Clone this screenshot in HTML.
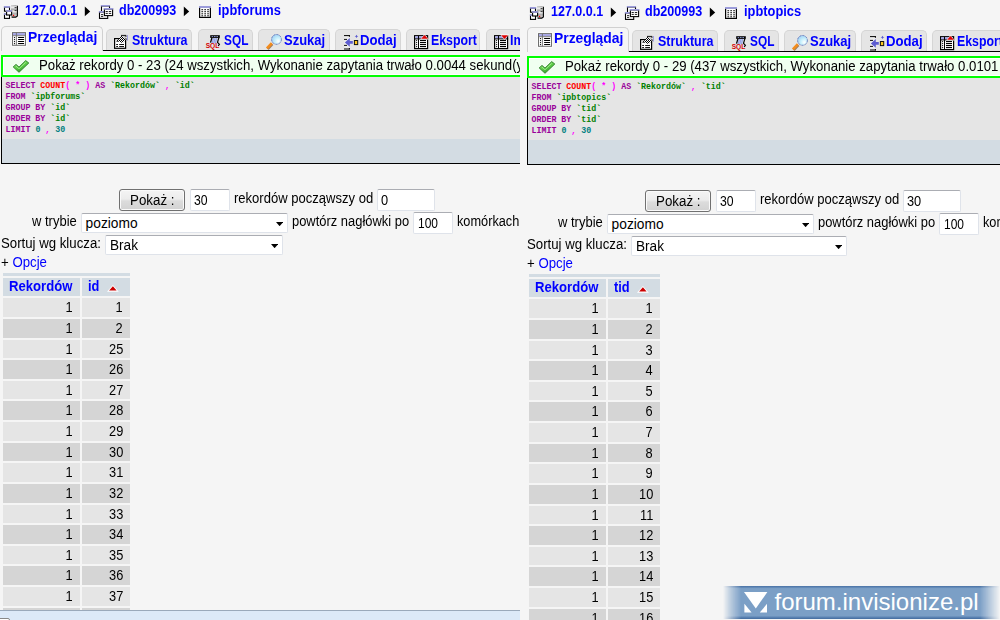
<!DOCTYPE html>
<html lang="pl"><head><meta charset="utf-8"><title>phpMyAdmin</title>
<style>
html,body{margin:0;padding:0}
body{width:1000px;height:620px;overflow:hidden;background:#f5f5f5;position:relative;font-family:"Liberation Sans",sans-serif;font-size:13.12px;color:#000}
.panel{position:absolute;overflow:hidden;background:#f5f5f5}
.inner{position:absolute;width:700px;height:700px}
.ic{position:absolute;display:block;line-height:0}
.ic svg{display:block;overflow:visible}
a,.l{color:#0000ff;text-decoration:none}
.x{position:absolute;white-space:nowrap;line-height:16px;transform-origin:0 50%}
.tabline{position:absolute;left:1px;top:50px;width:700px;height:1px;background:#000}
.tab{position:absolute;top:29px;height:21px;box-sizing:border-box;background:#e5e5e5;border:1px solid #d5d5d5;border-bottom:0;border-radius:5px 5px 0 0}
.tab.act{top:26px;height:25px;background:#f5f5f5;border-color:#d0d0d0}
.ok{position:absolute;left:1px;top:55px;width:700px;height:22px;box-sizing:border-box;border:2px solid #00ff00;background:#f0fff0;box-shadow:inset 0 0 0 1px #fff}
.sqlbox{position:absolute;left:1px;top:77px;width:700px;height:87px;box-sizing:border-box;border:1px solid #000;border-top:0;background:#e5e5e5}
.sql{margin:0;position:absolute;left:3.5px;top:4px;font-family:"Liberation Mono",monospace;font-size:8.3px;line-height:10.95px;white-space:pre;font-weight:bold}
.sql .k{color:#990099;font-weight:bold}
.sql .f{color:#ff0000}
.sql .p{color:#ff00ff}
.sql .q{color:#008000}
.sql .n{color:#008080}
.tools{position:absolute;left:0;top:61.5px;width:100%;height:24.5px;background:#d3dce3}
.btn{position:absolute;box-sizing:border-box;border:1px solid #707070;border-radius:3px;background:linear-gradient(#f4f4f4 0,#ececec 45%,#dcdcdc 55%,#d2d2d2 100%);box-shadow:inset 0 0 0 1px #fafafa}
.inp{position:absolute;box-sizing:border-box;border:1px solid #dfe3ea;border-top-color:#abadb3;background:#fff;border-radius:2px}
.sel{position:absolute;box-sizing:border-box;border:1px solid #dfe3ea;border-top-color:#abadb3;background:#fff;border-radius:2px}
.sel svg{position:absolute;right:3.9px;top:7.8px}
.strip{position:absolute;background:#d3dce3}
.th{position:absolute;background:#d3dce3}
.td{position:absolute;height:18.64px}
.td.odd{background:#e5e5e5}
.td.even{background:#d5d5d5}
.bar{position:absolute;left:0;top:610px;width:100%;height:10px;box-sizing:border-box;border-top:1px solid #9aa9bb;background:#dce9f8}
.knob{position:absolute;left:-3px;top:7px;width:11px;height:8px;border:1px solid #888;border-radius:2px;background:#fff}
.wm{position:absolute;left:723px;top:586px;width:277px;height:33px}
.wmbg{position:absolute;left:0;top:0;width:100%;height:32.5px;background:linear-gradient(#4a72a4 0,#5c84b4 1.2px,#7b9fc6 2.6px,#7b9fc6 29.8px,#5c84b4 31.2px,#4a72a4 32.5px);-webkit-mask-image:linear-gradient(to right,transparent 0,rgba(0,0,0,.5) 8px,#000 18px,#000 257px,rgba(0,0,0,.5) 267px,transparent 277px);mask-image:linear-gradient(to right,transparent 0,rgba(0,0,0,.5) 8px,#000 18px,#000 257px,rgba(0,0,0,.5) 267px,transparent 277px)}
.wmi{position:absolute;left:21px;top:5.5px}
.wmt{position:absolute;left:51.5px;top:0.5px;color:#fff;font-size:24px;line-height:30px;white-space:nowrap}
.rows{position:absolute;left:0;top:0}

</style></head><body>
<div class="panel" style="left:0px;top:0;width:520px;height:620px">
<div class="inner" style="left:0px;top:0px">
<span class="ic" style="left:3px;top:4px"><svg width="16" height="16" viewBox="0 0 16 16" ><defs><linearGradient id="tw" x1="0" y1="0" x2="0" y2="1"><stop offset="0" stop-color="#9a9a9a"/><stop offset=".18" stop-color="#f4f4f4"/><stop offset=".36" stop-color="#a8a8a8"/><stop offset=".52" stop-color="#f4f4f4"/><stop offset=".7" stop-color="#b0b0b0"/><stop offset="1" stop-color="#d8d8d8"/></linearGradient></defs><path d="M8 1.6 L13 1 L14.4 2 L14.4 12 L12.6 13.2 L8 13.2 Z" fill="url(#tw)"/><path d="M14.4 1.8 L14.4 12 L12.8 13.1 L8.6 13.1" fill="none" stroke="#000" stroke-width="1.1"/><path d="M11.6 3.6 l2 0 M11.6 6.6 l2 0" stroke="#222" stroke-width="0.9"/><rect x="9.9" y="10.8" width="1.3" height="1.3" fill="#ff0000"/><rect x="1.5" y="3" width="5" height="4.2" fill="#fff" stroke="#000" stroke-width="1.1"/><rect x="0.9" y="2" width="6.2" height="1.7" fill="#9c9cdc"/><rect x="1.5" y="10.2" width="5" height="4.2" fill="#fff" stroke="#000" stroke-width="1.1"/><rect x="0.9" y="9.2" width="2" height="1.7" fill="#9c9cdc"/><rect x="3.6" y="7" width="5" height="4" fill="#fff" stroke="#000" stroke-width="1.1"/><rect x="3" y="6.1" width="6" height="1.7" fill="#9c9cdc"/></svg></span>
<span class="x l" style="top:3.00px;font-size:13.78px;transform:scaleX(0.9083);left:25.40px;font-weight:bold;">127.0.0.1</span>
<span class="ic" style="left:84px;top:6px"><svg width="7" height="11" viewBox="0 0 7 11" ><path d="M0.8 0.6 L6.2 5.4 L0.8 10.2 Z" fill="#000"/></svg></span>
<span class="ic" style="left:98px;top:4px"><svg width="16" height="16" viewBox="0 0 16 16" ><rect x="3.5" y="2" width="8" height="7" fill="#fff" stroke="#000" stroke-width="1.1"/><rect x="2.9" y="1" width="9" height="1.5" fill="#9c9cdc"/><rect x="1.5" y="8" width="8.2" height="6.4" fill="#fff" stroke="#000" stroke-width="1.1"/><rect x="0.9" y="7" width="5" height="1.6" fill="#9c9cdc"/><rect x="3" y="10.1" width="2.2" height="1" fill="#222"/><rect x="3" y="11.9" width="2.2" height="1" fill="#222"/><rect x="6.4" y="5" width="8.2" height="6.6" fill="#fff" stroke="#000" stroke-width="1.1"/><rect x="5.8" y="4" width="9.4" height="1.6" fill="#9c9cdc"/><g fill="#222"><rect x="7.6" y="7" width="2.2" height="1"/><rect x="10.8" y="7" width="2.4" height="1"/><rect x="7.6" y="8.9" width="2.2" height="1"/><rect x="10.8" y="8.9" width="2.4" height="1"/></g></svg></span>
<span class="x l" style="top:3.00px;font-size:13.78px;transform:scaleX(0.9137);left:118.80px;font-weight:bold;">db200993</span>
<span class="ic" style="left:183px;top:6px"><svg width="7" height="11" viewBox="0 0 7 11" ><path d="M0.8 0.6 L6.2 5.4 L0.8 10.2 Z" fill="#000"/></svg></span>
<span class="ic" style="left:198px;top:5px"><svg width="14" height="14" viewBox="0 0 14 14" ><rect x="1.6" y="1.8" width="10.8" height="10.6" fill="#fff" stroke="#000" stroke-width="1.2"/><rect x="1" y="1" width="12" height="1.9" fill="#9c9cdc"/><g fill="#111"><rect x="3.4" y="4.2" width="1.7" height="1"/><rect x="6.3" y="4.2" width="1.7" height="1"/><rect x="9.2" y="4.2" width="1.7" height="1"/><rect x="3.4" y="6.2" width="1.7" height="1"/><rect x="6.3" y="6.2" width="1.7" height="1"/><rect x="9.2" y="6.2" width="1.7" height="1"/><rect x="3.4" y="8.3" width="1.7" height="1"/><rect x="6.3" y="8.3" width="1.7" height="1"/><rect x="9.2" y="8.3" width="1.7" height="1"/><rect x="3.4" y="10.3" width="1.7" height="1"/><rect x="6.3" y="10.3" width="1.7" height="1"/><rect x="9.2" y="10.3" width="1.7" height="1"/></g></svg></span>
<span class="x l" style="top:3.00px;font-size:13.78px;transform:scaleX(0.9330);left:218.00px;font-weight:bold;">ipbforums</span>
<div class="tabline"></div>
<div class="tab act" style="left:1px;width:102px"></div>
<span class="ic" style="left:11px;top:31px"><svg width="16" height="16" viewBox="0 0 16 16" ><rect x="0.4" y="0.5" width="15.2" height="15" fill="#fff"/><rect x="1.5" y="1.6" width="13" height="12.7" fill="#fff" stroke="#6e6e6e" stroke-width="1"/><rect x="2" y="2.1" width="12" height="2.2" fill="#a2a2e2"/><rect x="1" y="4.3" width="14" height="0.9" fill="#6e6e6e"/><rect x="4.9" y="1.6" width="0.9" height="12.7" fill="#6e6e6e"/><g fill="#000"><circle cx="3.5" cy="6.55" r="0.65"/><rect x="7" y="6" width="6.2" height="1.1" rx=".4"/><circle cx="3.5" cy="8.55" r="0.65"/><rect x="7" y="8" width="6.2" height="1.1" rx=".4"/><circle cx="3.5" cy="10.55" r="0.65"/><rect x="7" y="10" width="6.2" height="1.1" rx=".4"/><circle cx="3.5" cy="12.55" r="0.65"/><rect x="7" y="12" width="6.2" height="1.1" rx=".4"/></g></svg></span>
<span class="x l" style="top:30.00px;font-size:13.78px;transform:scaleX(1.0068);left:28.00px;font-weight:bold;">Przeglądaj</span>
<div class="tab" style="left:106px;width:86px"></div>
<span class="ic" style="left:113px;top:34px"><svg width="16" height="16" viewBox="0 0 16 16" ><defs><pattern id="ck" width="2" height="2" patternUnits="userSpaceOnUse"><rect width="2" height="2" fill="#fff"/><rect width="1" height="1" fill="#000"/><rect x="1" y="1" width="1" height="1" fill="#000"/></pattern></defs><rect x="1.6" y="4.6" width="11" height="9.7" fill="#fff" stroke="#000" stroke-width="1.2"/><g fill="#111"><rect x="3.2" y="10" width="1.8" height="1"/><rect x="6.2" y="10" width="4.8" height="1"/><rect x="3.2" y="12" width="1.8" height="1"/><rect x="6.2" y="12" width="4.8" height="1"/></g><path d="M8 1.6 L13.2 1.6 L13.2 5.6 Z" fill="#c8c8c8"/><path d="M4 7 L8.4 1.8 L13.4 5.6 L9.4 9 Z" fill="url(#ck)"/><path d="M8 1.4 L13.2 1.4" stroke="#000" stroke-width="0.9"/><rect x="12.5" y="1.6" width="0.9" height="1.3" fill="#000"/><rect x="12.5" y="4.6" width="0.9" height="1.2" fill="#000"/><path d="M3.2 7.8 L4.4 5.8 L5.6 7.4 Z" fill="#000"/><rect x="14" y="1" width="0.9" height="5.6" fill="#9898e0"/></svg></span>
<span class="x l" style="top:33.00px;font-size:13.78px;transform:scaleX(0.9076);left:132.00px;font-weight:bold;">Struktura</span>
<div class="tab" style="left:198px;width:55px"></div>
<span class="ic" style="left:205px;top:34px"><svg width="16" height="16" viewBox="0 0 16 16" ><path d="M7.6 4 L12.6 4 L11 9.4 L6 9.4 Z" fill="#c4ccf0"/><path d="M8.4 4.2 l-1.2 5 M10 4.2 l-1.2 5 M11.6 4.2 l-1.2 5" stroke="#7080d8" stroke-width="0.6"/><rect x="5.2" y="1.2" width="9.6" height="2.7" fill="#000"/><path d="M6.6 2.55 L13 2.55" stroke="#a8b4f0" stroke-width="0.8" stroke-dasharray="1.6 0.8"/><path d="M6.9 3.9 L5.5 8.6" stroke="#000" stroke-width="1.3"/><path d="M13.9 3.6 L12.5 8.4 L14.4 10.4 L13.2 12" fill="none" stroke="#000" stroke-width="1.2"/><text x="0.7" y="14.2" font-family="Liberation Sans, sans-serif" font-weight="bold" font-size="7.2" fill="#d40000" textLength="13.6" lengthAdjust="spacingAndGlyphs">SQL</text></svg></span>
<span class="x l" style="top:33.00px;font-size:13.78px;transform:scaleX(0.8614);left:224.20px;font-weight:bold;">SQL</span>
<div class="tab" style="left:258px;width:72px"></div>
<span class="ic" style="left:265px;top:33px"><svg width="18" height="18" viewBox="0 0 18 18" ><defs><radialGradient id="ln" cx=".68" cy=".68" r=".75"><stop offset="0" stop-color="#ffffff"/><stop offset=".45" stop-color="#c8f0fc"/><stop offset="1" stop-color="#9fd0f4"/></radialGradient></defs><path d="M2.7 16 L7.4 11" stroke="#6a3a10" stroke-width="2.6" stroke-linecap="butt" opacity=".6"/><path d="M1.9 15.4 L6.8 10.3" stroke="#f28c1e" stroke-width="2.7" stroke-linecap="butt"/><circle cx="11.5" cy="6.4" r="4.9" fill="url(#ln)" stroke="#6476ba" stroke-width="1" stroke-dasharray="2.2 1"/></svg></span>
<span class="x l" style="top:33.00px;font-size:13.78px;transform:scaleX(0.9437);left:283.80px;font-weight:bold;">Szukaj</span>
<div class="tab" style="left:335px;width:66px"></div>
<span class="ic" style="left:343px;top:34px"><svg width="16" height="16" viewBox="0 0 16 16" ><rect x="1.2" y="1.6" width="5.4" height="13.4" fill="#ececec"/><path d="M1 1.6 L6.9 1.6 M6.4 1.2 L6.4 2.8" stroke="#000" stroke-width="1"/><path d="M1 15 L6.9 15 M6.4 14 L6.4 15.4" stroke="#000" stroke-width="1"/><rect x="1" y="4.9" width="3" height="1" fill="#111"/><rect x="1" y="10.9" width="3" height="1" fill="#111"/><path d="M1.9 8.4 L6.8 4 L6.8 7 L9.8 7 L9.8 9.8 L6.8 9.8 L6.8 12.8 Z" fill="#5c5cd0"/><rect x="11.4" y="6.5" width="3.3" height="4.1" fill="#ffc81e" stroke="#111" stroke-width="1"/><path d="M13.5 0.8 L14.3 2 L15.4 2.4 L14.3 2.8 L13.5 4 L12.7 2.8 L11.6 2.4 L12.7 2 Z" fill="#5c5cd0"/></svg></span>
<span class="x l" style="top:33.00px;font-size:13.78px;transform:scaleX(0.9561);left:360.00px;font-weight:bold;">Dodaj</span>
<div class="tab" style="left:406px;width:74px"></div>
<span class="ic" style="left:414px;top:35px"><svg width="16" height="16" viewBox="0 0 16 16" ><rect x="0.6" y="0.7" width="13" height="12.9" fill="#fff" stroke="#000" stroke-width="1.2"/><rect x="1.2" y="1.3" width="11.8" height="2.2" fill="#a0a0e2"/><rect x="0" y="3.4" width="14.2" height="1" fill="#000"/><rect x="4" y="0.7" width="1" height="12.9" fill="#000"/><g fill="#000"><circle cx="2.6" cy="5.55" r="0.65"/><rect x="6" y="5" width="6" height="1.1"/><circle cx="2.6" cy="7.55" r="0.65"/><rect x="6" y="7" width="6" height="1.1"/><circle cx="2.6" cy="9.55" r="0.65"/><rect x="6" y="9" width="6" height="1.1"/><circle cx="2.6" cy="11.55" r="0.65"/><rect x="6" y="11" width="6" height="1.1"/></g><path d="M10.5 -0.8 L15 4.4 L6 4.4 Z" fill="#fff"/><path d="M10.5 0.1 L14 3.7 L7.1 3.7 Z" fill="#dc0000"/></svg></span>
<span class="x l" style="top:33.00px;font-size:13.78px;transform:scaleX(0.8966);left:431.00px;font-weight:bold;">Eksport</span>
<div class="tab" style="left:486px;width:74px"></div>
<span class="ic" style="left:494px;top:35px"><svg width="16" height="16" viewBox="0 0 16 16" ><rect x="0.6" y="0.7" width="13" height="12.9" fill="#fff" stroke="#000" stroke-width="1.2"/><rect x="1.2" y="1.3" width="11.8" height="2.2" fill="#a0a0e2"/><rect x="0" y="3.4" width="14.2" height="1" fill="#000"/><rect x="4" y="0.7" width="1" height="12.9" fill="#000"/><g fill="#000"><circle cx="2.6" cy="5.55" r="0.65"/><rect x="6" y="5" width="6" height="1.1"/><circle cx="2.6" cy="7.55" r="0.65"/><rect x="6" y="7" width="6" height="1.1"/><circle cx="2.6" cy="9.55" r="0.65"/><rect x="6" y="9" width="6" height="1.1"/><circle cx="2.6" cy="11.55" r="0.65"/><rect x="6" y="11" width="6" height="1.1"/></g><path d="M6 -0.4 L15 -0.4 L10.5 4.8 Z" fill="#fff"/><path d="M7.1 0.2 L14 0.2 L10.5 3.9 Z" fill="#dc0000"/></svg></span>
<span class="x l" style="top:33.00px;font-size:13.78px;transform:scaleX(0.9100);left:509.80px;font-weight:bold;">Import</span>
<div class="ok"></div><span class="ic" style="left:13px;top:59.5px"><svg width="17" height="13" viewBox="0 0 17 13" ><defs><linearGradient id="gk" x1="0.2" y1="0" x2="0.8" y2="1"><stop offset="0" stop-color="#8fe47a"/><stop offset=".45" stop-color="#5fcf48"/><stop offset="1" stop-color="#1f8f1f"/></linearGradient></defs><path d="M0.2 6.9 L3 4.4 L6 7.1 L12.7 0.6 L15.8 3 L6 12.3 Z" fill="url(#gk)" stroke="#2c7c28" stroke-width="0.9" stroke-linejoin="round"/><path d="M2.9 6 L6 8.8 L12.6 2.4" fill="none" stroke="#b4f4a4" stroke-width="0.9" opacity=".8"/></svg></span>
<span class="x " style="top:58.00px;font-size:13.78px;transform:scaleX(0.9590);left:39.20px;">Pokaż rekordy 0 - 23 (24 wszystkich, Wykonanie zapytania trwało 0.0044 sekund(y))</span>
<div class="sqlbox"><pre class="sql"><b class="k">SELECT</b> <span class="f">COUNT</span><span class="p">(</span> <span class="p">*</span> <span class="p">)</span> <b class="k">AS</b> <span class="q">`Rekordów`</span> <span class="p">,</span> <span class="q">`id`</span>
<b class="k">FROM</b> <span class="q">`ipbforums`</span>
<b class="k">GROUP BY</b> <span class="q">`id`</span>
<b class="k">ORDER BY</b> <span class="q">`id`</span>
<b class="k">LIMIT</b> <span class="n">0</span> <span class="p">,</span> <span class="n">30</span></pre><div class="tools"></div></div>
<div class="btn" style="left:119px;top:189px;width:66px;height:22px"></div>
<span class="x " style="top:193.00px;font-size:13.78px;transform:scaleX(0.9683);left:129.60px;">Pokaż :</span>
<div class="inp" style="left:190px;top:189px;width:40px;height:22px"></div>
<span class="x " style="top:193.00px;font-size:13.78px;transform:scaleX(0.8873);left:194.00px;">30</span>
<span class="x " style="top:191.00px;font-size:13.78px;transform:scaleX(0.9473);left:233.80px;">rekordów począwszy od</span>
<div class="inp" style="left:377px;top:189px;width:58px;height:22px"></div>
<span class="x " style="top:193.00px;font-size:13.78px;transform:scaleX(0.9300);left:380.80px;">0</span>
<span class="x " style="top:214.00px;font-size:13.78px;transform:scaleX(0.9436);left:31.80px;">w trybie</span>
<div class="sel" style="left:81px;top:213px;width:207px;height:20px"><svg width="7.2" height="4.4" viewBox="0 0 7.2 4.4"><path d="M0 0 L7.2 0 L3.6 4.2 Z" fill="#000"/></svg></div>
<span class="x " style="top:216.00px;font-size:13.78px;transform:scaleX(1.0000);left:85.60px;">poziomo</span>
<span class="x " style="top:214.00px;font-size:13.78px;transform:scaleX(0.9387);left:292.30px;">powtórz nagłówki po</span>
<div class="inp" style="left:413px;top:212px;width:40px;height:22px"></div>
<span class="x " style="top:216.00px;font-size:13.78px;transform:scaleX(0.8699);left:417.60px;">100</span>
<span class="x " style="top:214.00px;font-size:13.78px;transform:scaleX(0.9259);left:457.40px;">komórkach</span>
<span class="x " style="top:236.00px;font-size:13.78px;transform:scaleX(0.9601);left:1.40px;">Sortuj wg klucza:</span>
<div class="sel" style="left:105px;top:235px;width:178px;height:20px"><svg width="7.2" height="4.4" viewBox="0 0 7.2 4.4"><path d="M0 0 L7.2 0 L3.6 4.2 Z" fill="#000"/></svg></div>
<span class="x " style="top:238.00px;font-size:13.78px;transform:scaleX(0.9882);left:110.20px;">Brak</span>
<span class="x " style="top:255.00px;font-size:13.78px;transform:scaleX(0.9609);left:1.40px;">+ <a>Opcje</a></span>
<div class="strip" style="left:3px;top:273px;width:127px;height:3px"></div>
<div class="th" style="left:3px;top:278px;width:77px;height:18px"></div>
<div class="th" style="left:82px;top:278px;width:48px;height:18px"></div>
<span class="x l" style="top:279.00px;font-size:13.78px;transform:scaleX(0.9518);left:8.60px;font-weight:bold;">Rekordów</span>
<span class="x l" style="top:279.00px;font-size:13.78px;transform:scaleX(0.9300);left:88.20px;font-weight:bold;">id</span>
<span class="ic" style="left:107.3px;top:284.8px"><svg width="12" height="7" viewBox="0 0 12 7" ><path d="M0 6.7 L5.9 0.1 L11.8 6.7 Z" fill="#fff"/><path d="M2.1 5.5 L5.9 1.3 L9.6 5.5 Z" fill="#cc0000"/></svg></span>
<svg class="rows" width="140" height="700" viewBox="0 0 140 700" shape-rendering="crispEdges"><rect x="3" y="298" width="77" height="19" fill="#e5e5e5"/><rect x="82" y="298" width="48" height="19" fill="#e5e5e5"/><rect x="3" y="319" width="77" height="19" fill="#d5d5d5"/><rect x="82" y="319" width="48" height="19" fill="#d5d5d5"/><rect x="3" y="340" width="77" height="18" fill="#e5e5e5"/><rect x="82" y="340" width="48" height="18" fill="#e5e5e5"/><rect x="3" y="360" width="77" height="19" fill="#d5d5d5"/><rect x="82" y="360" width="48" height="19" fill="#d5d5d5"/><rect x="3" y="381" width="77" height="18" fill="#e5e5e5"/><rect x="82" y="381" width="48" height="18" fill="#e5e5e5"/><rect x="3" y="401" width="77" height="19" fill="#d5d5d5"/><rect x="82" y="401" width="48" height="19" fill="#d5d5d5"/><rect x="3" y="422" width="77" height="19" fill="#e5e5e5"/><rect x="82" y="422" width="48" height="19" fill="#e5e5e5"/><rect x="3" y="443" width="77" height="18" fill="#d5d5d5"/><rect x="82" y="443" width="48" height="18" fill="#d5d5d5"/><rect x="3" y="463" width="77" height="19" fill="#e5e5e5"/><rect x="82" y="463" width="48" height="19" fill="#e5e5e5"/><rect x="3" y="484" width="77" height="19" fill="#d5d5d5"/><rect x="82" y="484" width="48" height="19" fill="#d5d5d5"/><rect x="3" y="505" width="77" height="18" fill="#e5e5e5"/><rect x="82" y="505" width="48" height="18" fill="#e5e5e5"/><rect x="3" y="525" width="77" height="19" fill="#d5d5d5"/><rect x="82" y="525" width="48" height="19" fill="#d5d5d5"/><rect x="3" y="546" width="77" height="18" fill="#e5e5e5"/><rect x="82" y="546" width="48" height="18" fill="#e5e5e5"/><rect x="3" y="566" width="77" height="19" fill="#d5d5d5"/><rect x="82" y="566" width="48" height="19" fill="#d5d5d5"/><rect x="3" y="587" width="77" height="19" fill="#e5e5e5"/><rect x="82" y="587" width="48" height="19" fill="#e5e5e5"/><rect x="3" y="608" width="77" height="18" fill="#d5d5d5"/><rect x="82" y="608" width="48" height="18" fill="#d5d5d5"/></svg>
<span class="x " style="top:300.00px;font-size:13.78px;transform:scaleX(0.9300);right:627.60px;transform-origin:100% 50%;">1</span>
<span class="x " style="top:300.00px;font-size:13.78px;transform:scaleX(0.9300);right:577.20px;transform-origin:100% 50%;">1</span>
<span class="x " style="top:321.00px;font-size:13.78px;transform:scaleX(0.9300);right:627.60px;transform-origin:100% 50%;">1</span>
<span class="x " style="top:321.00px;font-size:13.78px;transform:scaleX(0.9300);right:577.20px;transform-origin:100% 50%;">2</span>
<span class="x " style="top:342.00px;font-size:13.78px;transform:scaleX(0.9300);right:627.60px;transform-origin:100% 50%;">1</span>
<span class="x " style="top:342.00px;font-size:13.78px;transform:scaleX(0.9300);right:577.20px;transform-origin:100% 50%;">25</span>
<span class="x " style="top:362.00px;font-size:13.78px;transform:scaleX(0.9300);right:627.60px;transform-origin:100% 50%;">1</span>
<span class="x " style="top:362.00px;font-size:13.78px;transform:scaleX(0.9300);right:577.20px;transform-origin:100% 50%;">26</span>
<span class="x " style="top:383.00px;font-size:13.78px;transform:scaleX(0.9300);right:627.60px;transform-origin:100% 50%;">1</span>
<span class="x " style="top:383.00px;font-size:13.78px;transform:scaleX(0.9300);right:577.20px;transform-origin:100% 50%;">27</span>
<span class="x " style="top:403.00px;font-size:13.78px;transform:scaleX(0.9300);right:627.60px;transform-origin:100% 50%;">1</span>
<span class="x " style="top:403.00px;font-size:13.78px;transform:scaleX(0.9300);right:577.20px;transform-origin:100% 50%;">28</span>
<span class="x " style="top:424.00px;font-size:13.78px;transform:scaleX(0.9300);right:627.60px;transform-origin:100% 50%;">1</span>
<span class="x " style="top:424.00px;font-size:13.78px;transform:scaleX(0.9300);right:577.20px;transform-origin:100% 50%;">29</span>
<span class="x " style="top:445.00px;font-size:13.78px;transform:scaleX(0.9300);right:627.60px;transform-origin:100% 50%;">1</span>
<span class="x " style="top:445.00px;font-size:13.78px;transform:scaleX(0.9300);right:577.20px;transform-origin:100% 50%;">30</span>
<span class="x " style="top:465.00px;font-size:13.78px;transform:scaleX(0.9300);right:627.60px;transform-origin:100% 50%;">1</span>
<span class="x " style="top:465.00px;font-size:13.78px;transform:scaleX(0.9300);right:577.20px;transform-origin:100% 50%;">31</span>
<span class="x " style="top:486.00px;font-size:13.78px;transform:scaleX(0.9300);right:627.60px;transform-origin:100% 50%;">1</span>
<span class="x " style="top:486.00px;font-size:13.78px;transform:scaleX(0.9300);right:577.20px;transform-origin:100% 50%;">32</span>
<span class="x " style="top:507.00px;font-size:13.78px;transform:scaleX(0.9300);right:627.60px;transform-origin:100% 50%;">1</span>
<span class="x " style="top:507.00px;font-size:13.78px;transform:scaleX(0.9300);right:577.20px;transform-origin:100% 50%;">33</span>
<span class="x " style="top:527.00px;font-size:13.78px;transform:scaleX(0.9300);right:627.60px;transform-origin:100% 50%;">1</span>
<span class="x " style="top:527.00px;font-size:13.78px;transform:scaleX(0.9300);right:577.20px;transform-origin:100% 50%;">34</span>
<span class="x " style="top:548.00px;font-size:13.78px;transform:scaleX(0.9300);right:627.60px;transform-origin:100% 50%;">1</span>
<span class="x " style="top:548.00px;font-size:13.78px;transform:scaleX(0.9300);right:577.20px;transform-origin:100% 50%;">35</span>
<span class="x " style="top:568.00px;font-size:13.78px;transform:scaleX(0.9300);right:627.60px;transform-origin:100% 50%;">1</span>
<span class="x " style="top:568.00px;font-size:13.78px;transform:scaleX(0.9300);right:577.20px;transform-origin:100% 50%;">36</span>
<span class="x " style="top:589.00px;font-size:13.78px;transform:scaleX(0.9300);right:627.60px;transform-origin:100% 50%;">1</span>
<span class="x " style="top:589.00px;font-size:13.78px;transform:scaleX(0.9300);right:577.20px;transform-origin:100% 50%;">37</span>
<span class="x " style="top:610.00px;font-size:13.78px;transform:scaleX(0.9300);right:627.60px;transform-origin:100% 50%;">1</span>
<span class="x " style="top:610.00px;font-size:13.78px;transform:scaleX(0.9300);right:577.20px;transform-origin:100% 50%;">38</span>
</div>
<div class="bar"><div class="knob"></div></div>
</div>
<div class="panel" style="left:520px;top:0;width:480px;height:620px">
<div class="inner" style="left:6px;top:1px">
<span class="ic" style="left:3px;top:4px"><svg width="16" height="16" viewBox="0 0 16 16" ><defs><linearGradient id="tw" x1="0" y1="0" x2="0" y2="1"><stop offset="0" stop-color="#9a9a9a"/><stop offset=".18" stop-color="#f4f4f4"/><stop offset=".36" stop-color="#a8a8a8"/><stop offset=".52" stop-color="#f4f4f4"/><stop offset=".7" stop-color="#b0b0b0"/><stop offset="1" stop-color="#d8d8d8"/></linearGradient></defs><path d="M8 1.6 L13 1 L14.4 2 L14.4 12 L12.6 13.2 L8 13.2 Z" fill="url(#tw)"/><path d="M14.4 1.8 L14.4 12 L12.8 13.1 L8.6 13.1" fill="none" stroke="#000" stroke-width="1.1"/><path d="M11.6 3.6 l2 0 M11.6 6.6 l2 0" stroke="#222" stroke-width="0.9"/><rect x="9.9" y="10.8" width="1.3" height="1.3" fill="#ff0000"/><rect x="1.5" y="3" width="5" height="4.2" fill="#fff" stroke="#000" stroke-width="1.1"/><rect x="0.9" y="2" width="6.2" height="1.7" fill="#9c9cdc"/><rect x="1.5" y="10.2" width="5" height="4.2" fill="#fff" stroke="#000" stroke-width="1.1"/><rect x="0.9" y="9.2" width="2" height="1.7" fill="#9c9cdc"/><rect x="3.6" y="7" width="5" height="4" fill="#fff" stroke="#000" stroke-width="1.1"/><rect x="3" y="6.1" width="6" height="1.7" fill="#9c9cdc"/></svg></span>
<span class="x l" style="top:3.00px;font-size:13.78px;transform:scaleX(0.9083);left:25.40px;font-weight:bold;">127.0.0.1</span>
<span class="ic" style="left:84px;top:6px"><svg width="7" height="11" viewBox="0 0 7 11" ><path d="M0.8 0.6 L6.2 5.4 L0.8 10.2 Z" fill="#000"/></svg></span>
<span class="ic" style="left:98px;top:4px"><svg width="16" height="16" viewBox="0 0 16 16" ><rect x="3.5" y="2" width="8" height="7" fill="#fff" stroke="#000" stroke-width="1.1"/><rect x="2.9" y="1" width="9" height="1.5" fill="#9c9cdc"/><rect x="1.5" y="8" width="8.2" height="6.4" fill="#fff" stroke="#000" stroke-width="1.1"/><rect x="0.9" y="7" width="5" height="1.6" fill="#9c9cdc"/><rect x="3" y="10.1" width="2.2" height="1" fill="#222"/><rect x="3" y="11.9" width="2.2" height="1" fill="#222"/><rect x="6.4" y="5" width="8.2" height="6.6" fill="#fff" stroke="#000" stroke-width="1.1"/><rect x="5.8" y="4" width="9.4" height="1.6" fill="#9c9cdc"/><g fill="#222"><rect x="7.6" y="7" width="2.2" height="1"/><rect x="10.8" y="7" width="2.4" height="1"/><rect x="7.6" y="8.9" width="2.2" height="1"/><rect x="10.8" y="8.9" width="2.4" height="1"/></g></svg></span>
<span class="x l" style="top:3.00px;font-size:13.78px;transform:scaleX(0.9137);left:118.80px;font-weight:bold;">db200993</span>
<span class="ic" style="left:183px;top:6px"><svg width="7" height="11" viewBox="0 0 7 11" ><path d="M0.8 0.6 L6.2 5.4 L0.8 10.2 Z" fill="#000"/></svg></span>
<span class="ic" style="left:198px;top:5px"><svg width="14" height="14" viewBox="0 0 14 14" ><rect x="1.6" y="1.8" width="10.8" height="10.6" fill="#fff" stroke="#000" stroke-width="1.2"/><rect x="1" y="1" width="12" height="1.9" fill="#9c9cdc"/><g fill="#111"><rect x="3.4" y="4.2" width="1.7" height="1"/><rect x="6.3" y="4.2" width="1.7" height="1"/><rect x="9.2" y="4.2" width="1.7" height="1"/><rect x="3.4" y="6.2" width="1.7" height="1"/><rect x="6.3" y="6.2" width="1.7" height="1"/><rect x="9.2" y="6.2" width="1.7" height="1"/><rect x="3.4" y="8.3" width="1.7" height="1"/><rect x="6.3" y="8.3" width="1.7" height="1"/><rect x="9.2" y="8.3" width="1.7" height="1"/><rect x="3.4" y="10.3" width="1.7" height="1"/><rect x="6.3" y="10.3" width="1.7" height="1"/><rect x="9.2" y="10.3" width="1.7" height="1"/></g></svg></span>
<span class="x l" style="top:3.00px;font-size:13.78px;transform:scaleX(0.9330);left:218.00px;font-weight:bold;">ipbtopics</span>
<div class="tabline"></div>
<div class="tab act" style="left:1px;width:102px"></div>
<span class="ic" style="left:11px;top:31px"><svg width="16" height="16" viewBox="0 0 16 16" ><rect x="0.4" y="0.5" width="15.2" height="15" fill="#fff"/><rect x="1.5" y="1.6" width="13" height="12.7" fill="#fff" stroke="#6e6e6e" stroke-width="1"/><rect x="2" y="2.1" width="12" height="2.2" fill="#a2a2e2"/><rect x="1" y="4.3" width="14" height="0.9" fill="#6e6e6e"/><rect x="4.9" y="1.6" width="0.9" height="12.7" fill="#6e6e6e"/><g fill="#000"><circle cx="3.5" cy="6.55" r="0.65"/><rect x="7" y="6" width="6.2" height="1.1" rx=".4"/><circle cx="3.5" cy="8.55" r="0.65"/><rect x="7" y="8" width="6.2" height="1.1" rx=".4"/><circle cx="3.5" cy="10.55" r="0.65"/><rect x="7" y="10" width="6.2" height="1.1" rx=".4"/><circle cx="3.5" cy="12.55" r="0.65"/><rect x="7" y="12" width="6.2" height="1.1" rx=".4"/></g></svg></span>
<span class="x l" style="top:30.00px;font-size:13.78px;transform:scaleX(1.0068);left:28.00px;font-weight:bold;">Przeglądaj</span>
<div class="tab" style="left:106px;width:86px"></div>
<span class="ic" style="left:113px;top:34px"><svg width="16" height="16" viewBox="0 0 16 16" ><defs><pattern id="ck" width="2" height="2" patternUnits="userSpaceOnUse"><rect width="2" height="2" fill="#fff"/><rect width="1" height="1" fill="#000"/><rect x="1" y="1" width="1" height="1" fill="#000"/></pattern></defs><rect x="1.6" y="4.6" width="11" height="9.7" fill="#fff" stroke="#000" stroke-width="1.2"/><g fill="#111"><rect x="3.2" y="10" width="1.8" height="1"/><rect x="6.2" y="10" width="4.8" height="1"/><rect x="3.2" y="12" width="1.8" height="1"/><rect x="6.2" y="12" width="4.8" height="1"/></g><path d="M8 1.6 L13.2 1.6 L13.2 5.6 Z" fill="#c8c8c8"/><path d="M4 7 L8.4 1.8 L13.4 5.6 L9.4 9 Z" fill="url(#ck)"/><path d="M8 1.4 L13.2 1.4" stroke="#000" stroke-width="0.9"/><rect x="12.5" y="1.6" width="0.9" height="1.3" fill="#000"/><rect x="12.5" y="4.6" width="0.9" height="1.2" fill="#000"/><path d="M3.2 7.8 L4.4 5.8 L5.6 7.4 Z" fill="#000"/><rect x="14" y="1" width="0.9" height="5.6" fill="#9898e0"/></svg></span>
<span class="x l" style="top:33.00px;font-size:13.78px;transform:scaleX(0.9076);left:132.00px;font-weight:bold;">Struktura</span>
<div class="tab" style="left:198px;width:55px"></div>
<span class="ic" style="left:205px;top:34px"><svg width="16" height="16" viewBox="0 0 16 16" ><path d="M7.6 4 L12.6 4 L11 9.4 L6 9.4 Z" fill="#c4ccf0"/><path d="M8.4 4.2 l-1.2 5 M10 4.2 l-1.2 5 M11.6 4.2 l-1.2 5" stroke="#7080d8" stroke-width="0.6"/><rect x="5.2" y="1.2" width="9.6" height="2.7" fill="#000"/><path d="M6.6 2.55 L13 2.55" stroke="#a8b4f0" stroke-width="0.8" stroke-dasharray="1.6 0.8"/><path d="M6.9 3.9 L5.5 8.6" stroke="#000" stroke-width="1.3"/><path d="M13.9 3.6 L12.5 8.4 L14.4 10.4 L13.2 12" fill="none" stroke="#000" stroke-width="1.2"/><text x="0.7" y="14.2" font-family="Liberation Sans, sans-serif" font-weight="bold" font-size="7.2" fill="#d40000" textLength="13.6" lengthAdjust="spacingAndGlyphs">SQL</text></svg></span>
<span class="x l" style="top:33.00px;font-size:13.78px;transform:scaleX(0.8614);left:224.20px;font-weight:bold;">SQL</span>
<div class="tab" style="left:258px;width:72px"></div>
<span class="ic" style="left:265px;top:33px"><svg width="18" height="18" viewBox="0 0 18 18" ><defs><radialGradient id="ln" cx=".68" cy=".68" r=".75"><stop offset="0" stop-color="#ffffff"/><stop offset=".45" stop-color="#c8f0fc"/><stop offset="1" stop-color="#9fd0f4"/></radialGradient></defs><path d="M2.7 16 L7.4 11" stroke="#6a3a10" stroke-width="2.6" stroke-linecap="butt" opacity=".6"/><path d="M1.9 15.4 L6.8 10.3" stroke="#f28c1e" stroke-width="2.7" stroke-linecap="butt"/><circle cx="11.5" cy="6.4" r="4.9" fill="url(#ln)" stroke="#6476ba" stroke-width="1" stroke-dasharray="2.2 1"/></svg></span>
<span class="x l" style="top:33.00px;font-size:13.78px;transform:scaleX(0.9437);left:283.80px;font-weight:bold;">Szukaj</span>
<div class="tab" style="left:335px;width:66px"></div>
<span class="ic" style="left:343px;top:34px"><svg width="16" height="16" viewBox="0 0 16 16" ><rect x="1.2" y="1.6" width="5.4" height="13.4" fill="#ececec"/><path d="M1 1.6 L6.9 1.6 M6.4 1.2 L6.4 2.8" stroke="#000" stroke-width="1"/><path d="M1 15 L6.9 15 M6.4 14 L6.4 15.4" stroke="#000" stroke-width="1"/><rect x="1" y="4.9" width="3" height="1" fill="#111"/><rect x="1" y="10.9" width="3" height="1" fill="#111"/><path d="M1.9 8.4 L6.8 4 L6.8 7 L9.8 7 L9.8 9.8 L6.8 9.8 L6.8 12.8 Z" fill="#5c5cd0"/><rect x="11.4" y="6.5" width="3.3" height="4.1" fill="#ffc81e" stroke="#111" stroke-width="1"/><path d="M13.5 0.8 L14.3 2 L15.4 2.4 L14.3 2.8 L13.5 4 L12.7 2.8 L11.6 2.4 L12.7 2 Z" fill="#5c5cd0"/></svg></span>
<span class="x l" style="top:33.00px;font-size:13.78px;transform:scaleX(0.9561);left:360.00px;font-weight:bold;">Dodaj</span>
<div class="tab" style="left:406px;width:74px"></div>
<span class="ic" style="left:414px;top:35px"><svg width="16" height="16" viewBox="0 0 16 16" ><rect x="0.6" y="0.7" width="13" height="12.9" fill="#fff" stroke="#000" stroke-width="1.2"/><rect x="1.2" y="1.3" width="11.8" height="2.2" fill="#a0a0e2"/><rect x="0" y="3.4" width="14.2" height="1" fill="#000"/><rect x="4" y="0.7" width="1" height="12.9" fill="#000"/><g fill="#000"><circle cx="2.6" cy="5.55" r="0.65"/><rect x="6" y="5" width="6" height="1.1"/><circle cx="2.6" cy="7.55" r="0.65"/><rect x="6" y="7" width="6" height="1.1"/><circle cx="2.6" cy="9.55" r="0.65"/><rect x="6" y="9" width="6" height="1.1"/><circle cx="2.6" cy="11.55" r="0.65"/><rect x="6" y="11" width="6" height="1.1"/></g><path d="M10.5 -0.8 L15 4.4 L6 4.4 Z" fill="#fff"/><path d="M10.5 0.1 L14 3.7 L7.1 3.7 Z" fill="#dc0000"/></svg></span>
<span class="x l" style="top:33.00px;font-size:13.78px;transform:scaleX(0.8966);left:431.00px;font-weight:bold;">Eksport</span>
<div class="tab" style="left:486px;width:74px"></div>
<span class="ic" style="left:494px;top:35px"><svg width="16" height="16" viewBox="0 0 16 16" ><rect x="0.6" y="0.7" width="13" height="12.9" fill="#fff" stroke="#000" stroke-width="1.2"/><rect x="1.2" y="1.3" width="11.8" height="2.2" fill="#a0a0e2"/><rect x="0" y="3.4" width="14.2" height="1" fill="#000"/><rect x="4" y="0.7" width="1" height="12.9" fill="#000"/><g fill="#000"><circle cx="2.6" cy="5.55" r="0.65"/><rect x="6" y="5" width="6" height="1.1"/><circle cx="2.6" cy="7.55" r="0.65"/><rect x="6" y="7" width="6" height="1.1"/><circle cx="2.6" cy="9.55" r="0.65"/><rect x="6" y="9" width="6" height="1.1"/><circle cx="2.6" cy="11.55" r="0.65"/><rect x="6" y="11" width="6" height="1.1"/></g><path d="M6 -0.4 L15 -0.4 L10.5 4.8 Z" fill="#fff"/><path d="M7.1 0.2 L14 0.2 L10.5 3.9 Z" fill="#dc0000"/></svg></span>
<span class="x l" style="top:33.00px;font-size:13.78px;transform:scaleX(0.9100);left:509.80px;font-weight:bold;">Import</span>
<div class="ok"></div><span class="ic" style="left:13px;top:59.5px"><svg width="17" height="13" viewBox="0 0 17 13" ><defs><linearGradient id="gk" x1="0.2" y1="0" x2="0.8" y2="1"><stop offset="0" stop-color="#8fe47a"/><stop offset=".45" stop-color="#5fcf48"/><stop offset="1" stop-color="#1f8f1f"/></linearGradient></defs><path d="M0.2 6.9 L3 4.4 L6 7.1 L12.7 0.6 L15.8 3 L6 12.3 Z" fill="url(#gk)" stroke="#2c7c28" stroke-width="0.9" stroke-linejoin="round"/><path d="M2.9 6 L6 8.8 L12.6 2.4" fill="none" stroke="#b4f4a4" stroke-width="0.9" opacity=".8"/></svg></span>
<span class="x " style="top:58.00px;font-size:13.78px;transform:scaleX(0.9570);left:39.20px;">Pokaż rekordy 0 - 29 (437 wszystkich, Wykonanie zapytania trwało 0.0101 sekund(y))</span>
<div class="sqlbox"><pre class="sql"><b class="k">SELECT</b> <span class="f">COUNT</span><span class="p">(</span> <span class="p">*</span> <span class="p">)</span> <b class="k">AS</b> <span class="q">`Rekordów`</span> <span class="p">,</span> <span class="q">`tid`</span>
<b class="k">FROM</b> <span class="q">`ipbtopics`</span>
<b class="k">GROUP BY</b> <span class="q">`tid`</span>
<b class="k">ORDER BY</b> <span class="q">`tid`</span>
<b class="k">LIMIT</b> <span class="n">0</span> <span class="p">,</span> <span class="n">30</span></pre><div class="tools"></div></div>
<div class="btn" style="left:119px;top:189px;width:66px;height:22px"></div>
<span class="x " style="top:193.00px;font-size:13.78px;transform:scaleX(0.9683);left:129.60px;">Pokaż :</span>
<div class="inp" style="left:190px;top:189px;width:40px;height:22px"></div>
<span class="x " style="top:193.00px;font-size:13.78px;transform:scaleX(0.8873);left:194.00px;">30</span>
<span class="x " style="top:191.00px;font-size:13.78px;transform:scaleX(0.9473);left:233.80px;">rekordów począwszy od</span>
<div class="inp" style="left:377px;top:189px;width:58px;height:22px"></div>
<span class="x " style="top:193.00px;font-size:13.78px;transform:scaleX(0.9300);left:380.80px;">30</span>
<span class="x " style="top:214.00px;font-size:13.78px;transform:scaleX(0.9436);left:31.80px;">w trybie</span>
<div class="sel" style="left:81px;top:213px;width:207px;height:20px"><svg width="7.2" height="4.4" viewBox="0 0 7.2 4.4"><path d="M0 0 L7.2 0 L3.6 4.2 Z" fill="#000"/></svg></div>
<span class="x " style="top:216.00px;font-size:13.78px;transform:scaleX(1.0000);left:85.60px;">poziomo</span>
<span class="x " style="top:214.00px;font-size:13.78px;transform:scaleX(0.9387);left:292.30px;">powtórz nagłówki po</span>
<div class="inp" style="left:413px;top:212px;width:40px;height:22px"></div>
<span class="x " style="top:216.00px;font-size:13.78px;transform:scaleX(0.8699);left:417.60px;">100</span>
<span class="x " style="top:214.00px;font-size:13.78px;transform:scaleX(0.9259);left:457.40px;">komórkach</span>
<span class="x " style="top:236.00px;font-size:13.78px;transform:scaleX(0.9601);left:1.40px;">Sortuj wg klucza:</span>
<div class="sel" style="left:105px;top:235px;width:216px;height:20px"><svg width="7.2" height="4.4" viewBox="0 0 7.2 4.4"><path d="M0 0 L7.2 0 L3.6 4.2 Z" fill="#000"/></svg></div>
<span class="x " style="top:238.00px;font-size:13.78px;transform:scaleX(0.9882);left:110.20px;">Brak</span>
<span class="x " style="top:255.00px;font-size:13.78px;transform:scaleX(0.9609);left:1.40px;">+ <a>Opcje</a></span>
<div class="strip" style="left:3px;top:273px;width:131px;height:3px"></div>
<div class="th" style="left:3px;top:278px;width:77px;height:18px"></div>
<div class="th" style="left:82px;top:278px;width:52px;height:18px"></div>
<span class="x l" style="top:279.00px;font-size:13.78px;transform:scaleX(0.9518);left:8.60px;font-weight:bold;">Rekordów</span>
<span class="x l" style="top:279.00px;font-size:13.78px;transform:scaleX(0.9300);left:88.20px;font-weight:bold;">tid</span>
<span class="ic" style="left:111.3px;top:284.8px"><svg width="12" height="7" viewBox="0 0 12 7" ><path d="M0 6.7 L5.9 0.1 L11.8 6.7 Z" fill="#fff"/><path d="M2.1 5.5 L5.9 1.3 L9.6 5.5 Z" fill="#cc0000"/></svg></span>
<svg class="rows" width="140" height="700" viewBox="0 0 140 700" shape-rendering="crispEdges"><rect x="3" y="298" width="77" height="19" fill="#e5e5e5"/><rect x="82" y="298" width="52" height="19" fill="#e5e5e5"/><rect x="3" y="319" width="77" height="19" fill="#d5d5d5"/><rect x="82" y="319" width="52" height="19" fill="#d5d5d5"/><rect x="3" y="340" width="77" height="18" fill="#e5e5e5"/><rect x="82" y="340" width="52" height="18" fill="#e5e5e5"/><rect x="3" y="360" width="77" height="19" fill="#d5d5d5"/><rect x="82" y="360" width="52" height="19" fill="#d5d5d5"/><rect x="3" y="381" width="77" height="18" fill="#e5e5e5"/><rect x="82" y="381" width="52" height="18" fill="#e5e5e5"/><rect x="3" y="401" width="77" height="19" fill="#d5d5d5"/><rect x="82" y="401" width="52" height="19" fill="#d5d5d5"/><rect x="3" y="422" width="77" height="19" fill="#e5e5e5"/><rect x="82" y="422" width="52" height="19" fill="#e5e5e5"/><rect x="3" y="443" width="77" height="18" fill="#d5d5d5"/><rect x="82" y="443" width="52" height="18" fill="#d5d5d5"/><rect x="3" y="463" width="77" height="19" fill="#e5e5e5"/><rect x="82" y="463" width="52" height="19" fill="#e5e5e5"/><rect x="3" y="484" width="77" height="19" fill="#d5d5d5"/><rect x="82" y="484" width="52" height="19" fill="#d5d5d5"/><rect x="3" y="505" width="77" height="18" fill="#e5e5e5"/><rect x="82" y="505" width="52" height="18" fill="#e5e5e5"/><rect x="3" y="525" width="77" height="19" fill="#d5d5d5"/><rect x="82" y="525" width="52" height="19" fill="#d5d5d5"/><rect x="3" y="546" width="77" height="18" fill="#e5e5e5"/><rect x="82" y="546" width="52" height="18" fill="#e5e5e5"/><rect x="3" y="566" width="77" height="19" fill="#d5d5d5"/><rect x="82" y="566" width="52" height="19" fill="#d5d5d5"/><rect x="3" y="587" width="77" height="19" fill="#e5e5e5"/><rect x="82" y="587" width="52" height="19" fill="#e5e5e5"/><rect x="3" y="608" width="77" height="18" fill="#d5d5d5"/><rect x="82" y="608" width="52" height="18" fill="#d5d5d5"/><rect x="3" y="628" width="77" height="19" fill="#e5e5e5"/><rect x="82" y="628" width="52" height="19" fill="#e5e5e5"/></svg>
<span class="x " style="top:300.00px;font-size:13.78px;transform:scaleX(0.9300);right:627.60px;transform-origin:100% 50%;">1</span>
<span class="x " style="top:300.00px;font-size:13.78px;transform:scaleX(0.9300);right:573.20px;transform-origin:100% 50%;">1</span>
<span class="x " style="top:321.00px;font-size:13.78px;transform:scaleX(0.9300);right:627.60px;transform-origin:100% 50%;">1</span>
<span class="x " style="top:321.00px;font-size:13.78px;transform:scaleX(0.9300);right:573.20px;transform-origin:100% 50%;">2</span>
<span class="x " style="top:342.00px;font-size:13.78px;transform:scaleX(0.9300);right:627.60px;transform-origin:100% 50%;">1</span>
<span class="x " style="top:342.00px;font-size:13.78px;transform:scaleX(0.9300);right:573.20px;transform-origin:100% 50%;">3</span>
<span class="x " style="top:362.00px;font-size:13.78px;transform:scaleX(0.9300);right:627.60px;transform-origin:100% 50%;">1</span>
<span class="x " style="top:362.00px;font-size:13.78px;transform:scaleX(0.9300);right:573.20px;transform-origin:100% 50%;">4</span>
<span class="x " style="top:383.00px;font-size:13.78px;transform:scaleX(0.9300);right:627.60px;transform-origin:100% 50%;">1</span>
<span class="x " style="top:383.00px;font-size:13.78px;transform:scaleX(0.9300);right:573.20px;transform-origin:100% 50%;">5</span>
<span class="x " style="top:403.00px;font-size:13.78px;transform:scaleX(0.9300);right:627.60px;transform-origin:100% 50%;">1</span>
<span class="x " style="top:403.00px;font-size:13.78px;transform:scaleX(0.9300);right:573.20px;transform-origin:100% 50%;">6</span>
<span class="x " style="top:424.00px;font-size:13.78px;transform:scaleX(0.9300);right:627.60px;transform-origin:100% 50%;">1</span>
<span class="x " style="top:424.00px;font-size:13.78px;transform:scaleX(0.9300);right:573.20px;transform-origin:100% 50%;">7</span>
<span class="x " style="top:445.00px;font-size:13.78px;transform:scaleX(0.9300);right:627.60px;transform-origin:100% 50%;">1</span>
<span class="x " style="top:445.00px;font-size:13.78px;transform:scaleX(0.9300);right:573.20px;transform-origin:100% 50%;">8</span>
<span class="x " style="top:465.00px;font-size:13.78px;transform:scaleX(0.9300);right:627.60px;transform-origin:100% 50%;">1</span>
<span class="x " style="top:465.00px;font-size:13.78px;transform:scaleX(0.9300);right:573.20px;transform-origin:100% 50%;">9</span>
<span class="x " style="top:486.00px;font-size:13.78px;transform:scaleX(0.9300);right:627.60px;transform-origin:100% 50%;">1</span>
<span class="x " style="top:486.00px;font-size:13.78px;transform:scaleX(0.9300);right:573.20px;transform-origin:100% 50%;">10</span>
<span class="x " style="top:507.00px;font-size:13.78px;transform:scaleX(0.9300);right:627.60px;transform-origin:100% 50%;">1</span>
<span class="x " style="top:507.00px;font-size:13.78px;transform:scaleX(0.9300);right:573.20px;transform-origin:100% 50%;">11</span>
<span class="x " style="top:527.00px;font-size:13.78px;transform:scaleX(0.9300);right:627.60px;transform-origin:100% 50%;">1</span>
<span class="x " style="top:527.00px;font-size:13.78px;transform:scaleX(0.9300);right:573.20px;transform-origin:100% 50%;">12</span>
<span class="x " style="top:548.00px;font-size:13.78px;transform:scaleX(0.9300);right:627.60px;transform-origin:100% 50%;">1</span>
<span class="x " style="top:548.00px;font-size:13.78px;transform:scaleX(0.9300);right:573.20px;transform-origin:100% 50%;">13</span>
<span class="x " style="top:568.00px;font-size:13.78px;transform:scaleX(0.9300);right:627.60px;transform-origin:100% 50%;">1</span>
<span class="x " style="top:568.00px;font-size:13.78px;transform:scaleX(0.9300);right:573.20px;transform-origin:100% 50%;">14</span>
<span class="x " style="top:589.00px;font-size:13.78px;transform:scaleX(0.9300);right:627.60px;transform-origin:100% 50%;">1</span>
<span class="x " style="top:589.00px;font-size:13.78px;transform:scaleX(0.9300);right:573.20px;transform-origin:100% 50%;">15</span>
<span class="x " style="top:610.00px;font-size:13.78px;transform:scaleX(0.9300);right:627.60px;transform-origin:100% 50%;">1</span>
<span class="x " style="top:610.00px;font-size:13.78px;transform:scaleX(0.9300);right:573.20px;transform-origin:100% 50%;">16</span>
<span class="x " style="top:630.00px;font-size:13.78px;transform:scaleX(0.9300);right:627.60px;transform-origin:100% 50%;">1</span>
<span class="x " style="top:630.00px;font-size:13.78px;transform:scaleX(0.9300);right:573.20px;transform-origin:100% 50%;">17</span>
</div>
</div>
<div class="wm"><div class="wmbg"></div><svg class="wmi" width="24" height="21" viewBox="0 0 24 21"><path d="M0 0 L23.4 0 L11.8 16.6 Z" fill="#fff"/><path d="M0.4 11.8 L7.6 20.6 L0.4 20.6 Z" fill="#fff"/><path d="M23 11.8 L15.8 20.6 L23 20.6 Z" fill="#fff"/></svg><span class="wmt">forum.invisionize.pl</span></div>
</body></html>
